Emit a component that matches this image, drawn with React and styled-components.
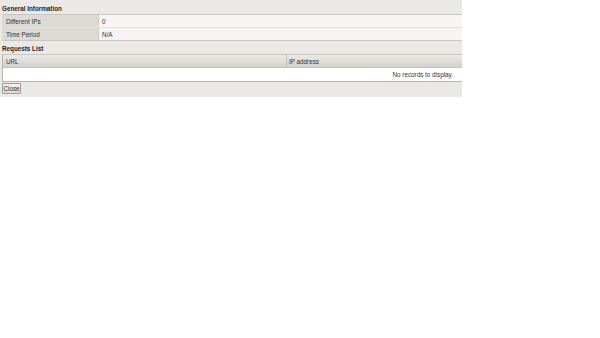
import React from 'react';
import styled, { createGlobalStyle } from 'styled-components';

const GlobalStyle = createGlobalStyle`
  html, body {
    margin: 0;
    padding: 0;
    background: #ffffff;
    font-family: 'Liberation Sans', Arial, sans-serif;
  }
`;

const info = [
  { label: 'Different IPs', value: '0' },
  { label: 'Time Period', value: 'N/A' },
];

const columns = [
  { title: 'URL', width: 284 },
  { title: 'IP address' },
];

export default function App() {
  return (
    <>
      <GlobalStyle />
      <Page>
        <SectionTitle first>General Information</SectionTitle>
        <InfoTable>
          {info.map((row) => (
            <InfoRow key={row.label}>
              <LabelCell>{row.label}</LabelCell>
              <ValueCell>{row.value}</ValueCell>
            </InfoRow>
          ))}
        </InfoTable>
        <SectionTitle>Requests List</SectionTitle>
        <Grid>
          <GridHeader>
            {columns.map((col) => (
              <HeaderCell key={col.title} width={col.width}>
                {col.title}
              </HeaderCell>
            ))}
          </GridHeader>
          <EmptyRow>No records to display.</EmptyRow>
        </Grid>
        <Footer>
          <CloseButton type="button">Close</CloseButton>
        </Footer>
      </Page>
    </>
  );
}

const Page = styled.div`
  width: 462px;
  background: #ebe9e5;
  padding-bottom: 3px;
  font-size: 6.3px;
  color: #333;
`;

const SectionTitle = styled.div`
  font-weight: bold;
  color: #1e1e1e;
  height: ${({ first }) => (first ? 14 : 13)}px;
  line-height: 10px;
  padding: ${({ first }) => (first ? 4 : 3)}px 2px 0;
  box-sizing: border-box;
`;

const InfoTable = styled.div`
  margin-left: 2px;
  border-top: 1px solid #c9c7c1;
  border-bottom: 1px solid #c9c7c1;
`;

const InfoRow = styled.div`
  display: flex;
  height: 12px;
  & + & {
    border-top: 1px solid #e3e1dc;
  }
`;

const LabelCell = styled.div`
  width: 92px;
  padding: 1px 0 0 4px;
  background: #dcdad5;
  border-right: 1px solid #d0cec9;
  line-height: 11px;
  color: #333;
`;

const ValueCell = styled.div`
  flex: 1;
  padding: 1px 0 0 3px;
  background: #f6f5f3;
  line-height: 11px;
  color: #333;
`;

const Grid = styled.div`
  margin-left: 2px;
  border-left: 1px solid #b5b3ae;
  border-bottom: 1px solid #b5b3ae;
  border-top: 1px solid #c8c6c1;
`;

const GridHeader = styled.div`
  display: flex;
  height: 12px;
  background: linear-gradient(#ebeae6, #d2d0cb);
  border-bottom: 1px solid #c4c2bd;
`;

const HeaderCell = styled.div`
  ${({ width }) => (width ? `width: ${width}px;` : 'flex: 1;')}
  box-sizing: border-box;
  padding: 1px 0 0 ${({ width }) => (width ? 3 : 2)}px;
  line-height: 11px;
  color: #333;
  ${({ width }) => (width ? 'border-right: 1px solid #c4c2bd;' : '')}
`;

const EmptyRow = styled.div`
  height: 13px;
  line-height: 13px;
  background: #ffffff;
  text-align: right;
  padding-right: 9px;
  color: #333;
`;

const Footer = styled.div`
  padding: 1px 0 0 2px;
`;

const CloseButton = styled.button`
  display: block;
  height: 11px;
  width: 19px;
  padding: 0;
  font-family: 'Liberation Sans', Arial, sans-serif;
  font-size: 6.3px;
  color: #333;
  background: linear-gradient(#f4f3f0, #dcdad5);
  border: 1px solid #9e9c98;
  border-radius: 1px;
  line-height: 9px;
`;
